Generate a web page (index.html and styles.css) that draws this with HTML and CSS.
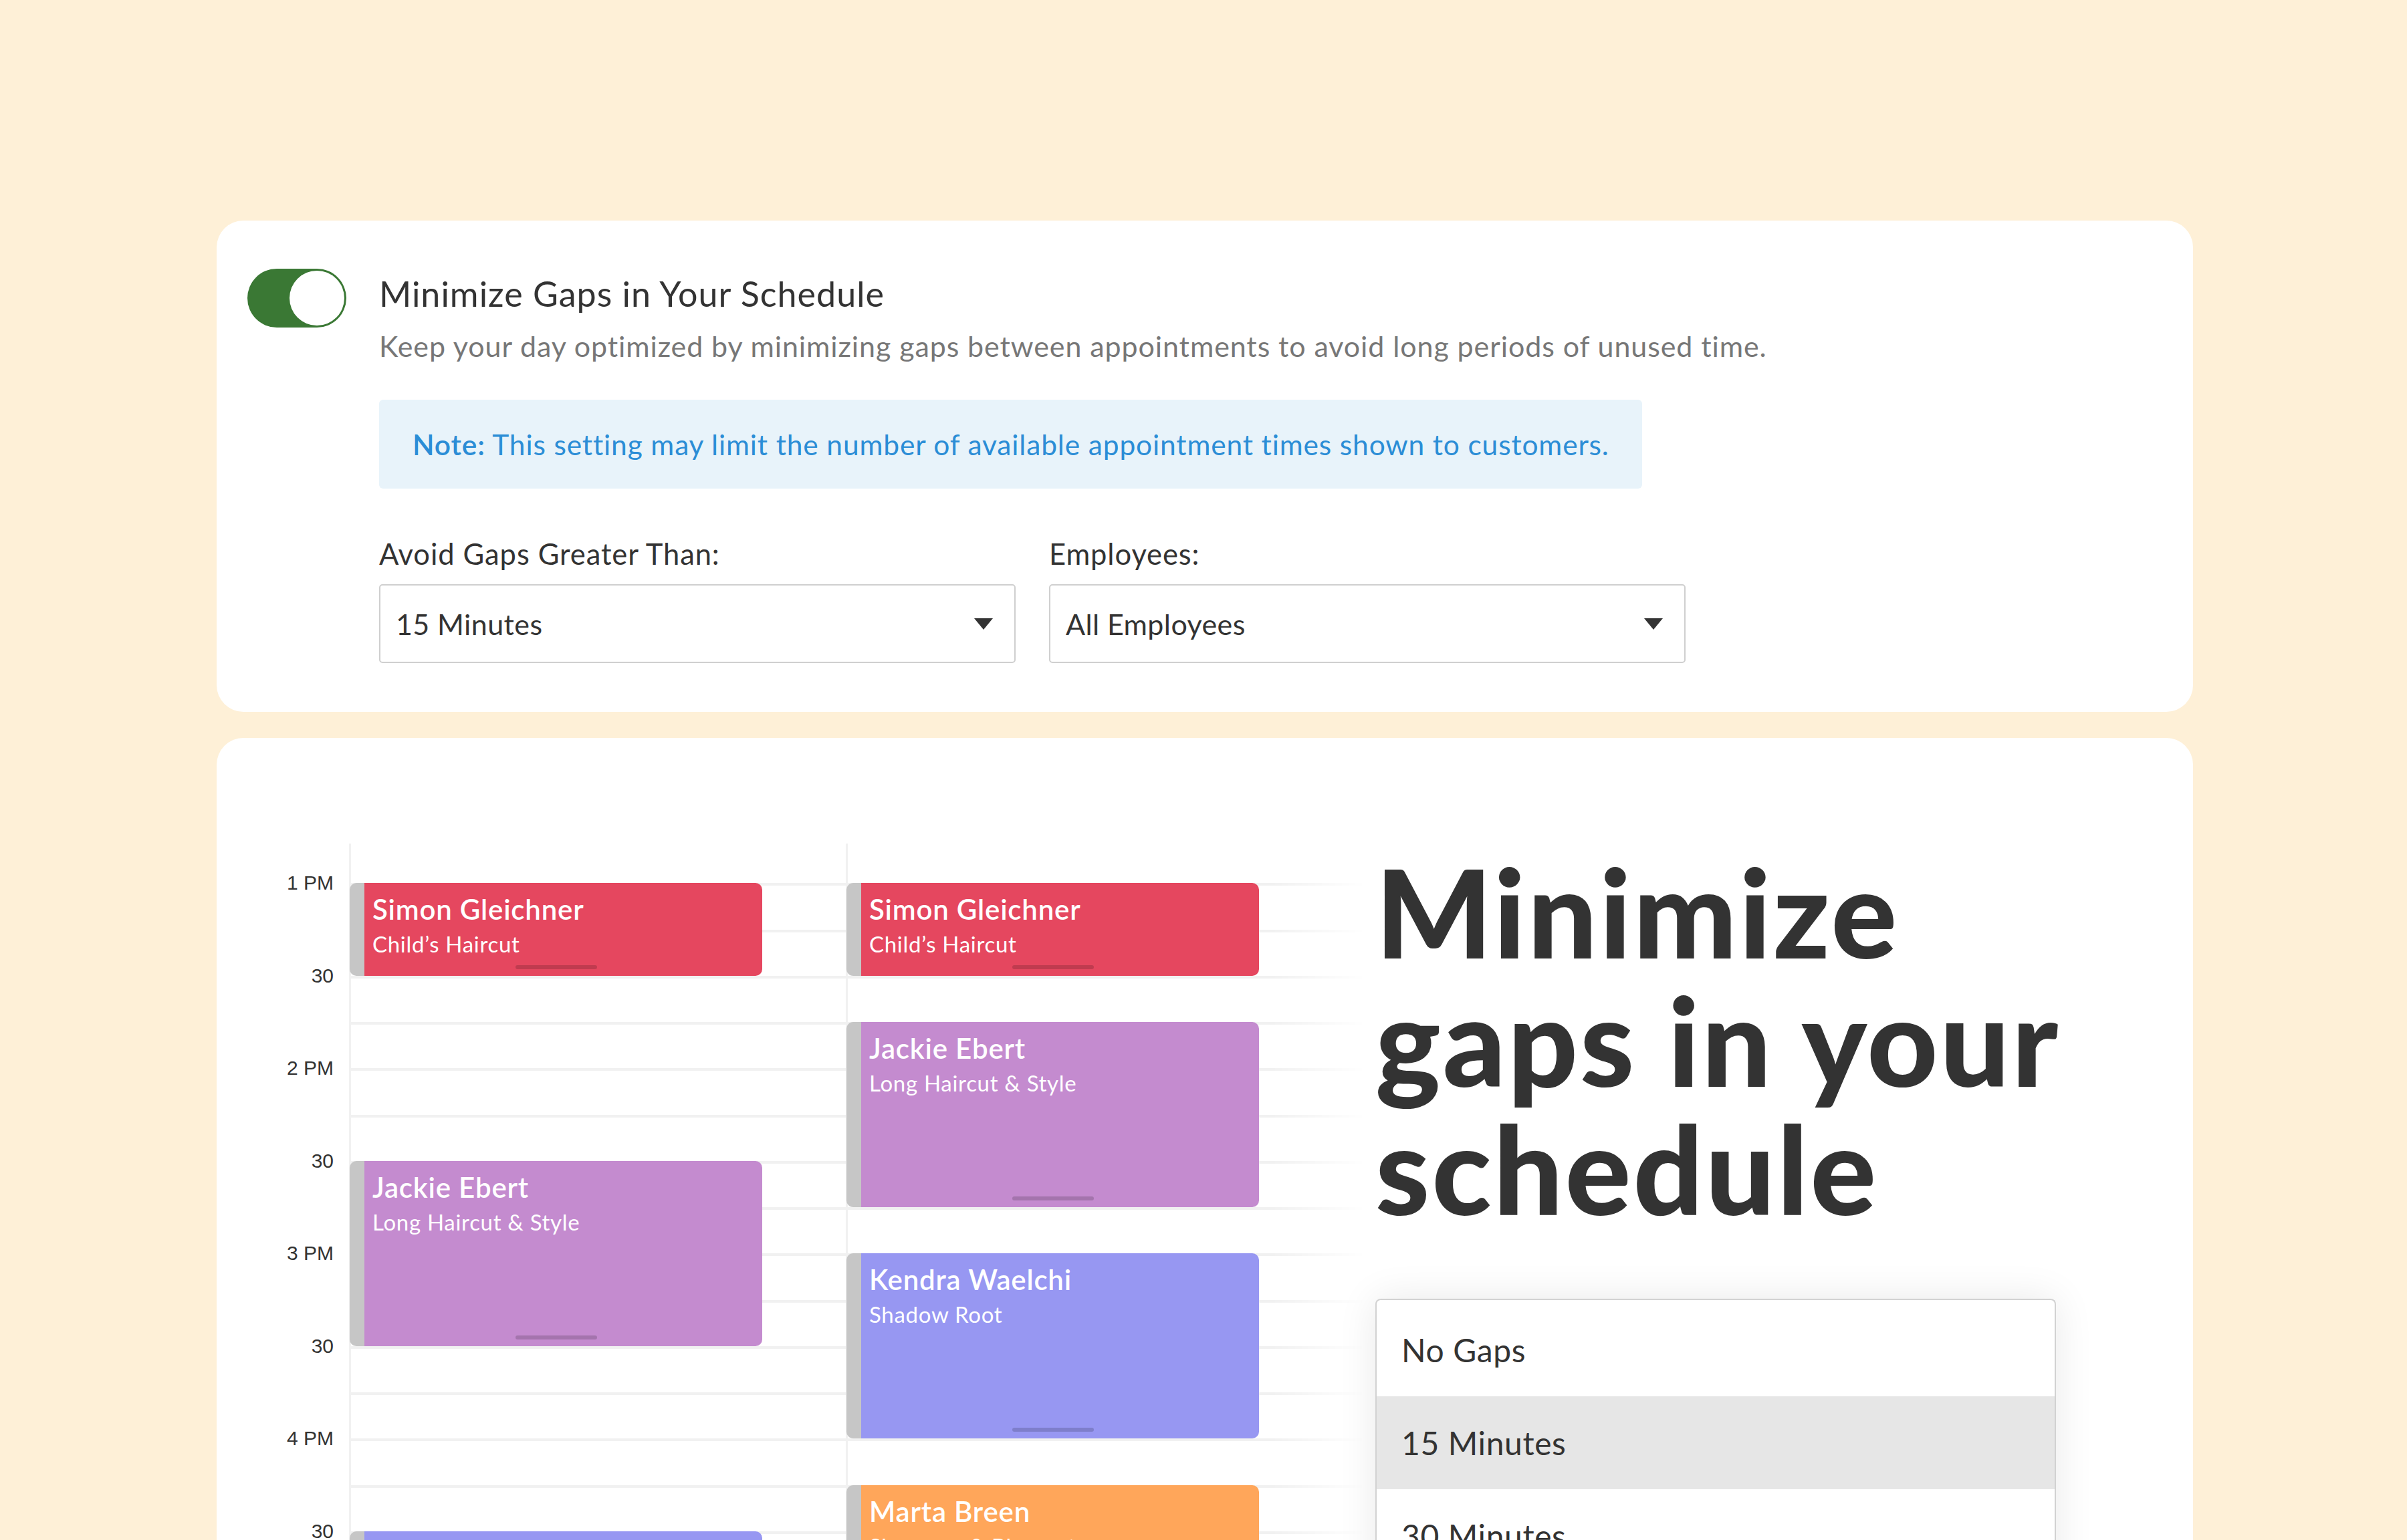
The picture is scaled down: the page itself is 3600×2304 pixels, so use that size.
FILE: index.html
```html
<!DOCTYPE html>
<html lang="en">
<head>
<meta charset="utf-8">
<title>Minimize Gaps</title>
<link rel="stylesheet" href="styles.css">
</head>
<body>
<main class="page">
  <section class="card settings">
    <div class="toggle" role="switch" aria-checked="true"><span class="knob"></span></div>
    <div class="settings-body">
      <h2 class="title">Minimize Gaps in Your Schedule</h2>
      <p class="desc">Keep your day optimized by minimizing gaps between appointments to avoid long periods of unused time.</p>
      <div class="note"><strong>Note:</strong> This setting may limit the number of available appointment times shown to customers.</div>
      <div class="fields">
        <div class="field">
          <label class="label">Avoid Gaps Greater Than:</label>
          <div class="select"><span>15 Minutes</span><span class="caret"></span></div>
        </div>
        <div class="field">
          <label class="label">Employees:</label>
          <div class="select"><span>All Employees</span><span class="caret"></span></div>
        </div>
      </div>
    </div>
  </section>

  <section class="card showcase">
    <div class="calendar">
      <div class="times">
        <div class="time">1 PM</div>
        <div class="time">30</div>
        <div class="time">2 PM</div>
        <div class="time">30</div>
        <div class="time">3 PM</div>
        <div class="time">30</div>
        <div class="time">4 PM</div>
        <div class="time">30</div>
      </div>
      <div class="grid">
        <div class="slots">
          <div class="slot"></div><div class="slot"></div><div class="slot"></div><div class="slot"></div>
          <div class="slot"></div><div class="slot"></div><div class="slot"></div><div class="slot"></div>
          <div class="slot"></div><div class="slot"></div><div class="slot"></div><div class="slot"></div>
          <div class="slot"></div><div class="slot"></div><div class="slot"></div><div class="slot"></div>
        </div>
        <div class="columns">
          <div class="col">
            <div class="event red" style="top:69.25px;height:138.5px"><div class="name">Simon Gleichner</div><div class="service">Child’s Haircut</div><span class="handle"></span></div>
            <div class="event purple" style="top:485px;height:277px"><div class="name">Jackie Ebert</div><div class="service">Long Haircut &amp; Style</div><span class="handle"></span></div>
            <div class="event blue" style="top:1038.75px;height:277px"><div class="name">Kendra Waelchi</div><div class="service">Shadow Root</div><span class="handle"></span></div>
          </div>
          <div class="col">
            <div class="event red" style="top:69.25px;height:138.5px"><div class="name">Simon Gleichner</div><div class="service">Child’s Haircut</div><span class="handle"></span></div>
            <div class="event purple" style="top:277px;height:277px"><div class="name">Jackie Ebert</div><div class="service">Long Haircut &amp; Style</div><span class="handle"></span></div>
            <div class="event blue" style="top:623.25px;height:277px"><div class="name">Kendra Waelchi</div><div class="service">Shadow Root</div><span class="handle"></span></div>
            <div class="event orange" style="top:969.5px;height:207.75px"><div class="name">Marta Breen</div><div class="service">Shampoo &amp; Blowout</div><span class="handle"></span></div>
          </div>
        </div>
      </div>
    </div>
    <div class="promo">
      <h1 class="headline"><span class="line">Minimize</span><span class="line">gaps in your</span><span class="line">schedule</span></h1>
      <ul class="menu">
        <li>No Gaps</li>
        <li class="active">15 Minutes</li>
        <li>30 Minutes</li>
        <li>45 Minutes</li>
      </ul>
    </div>
  </section>
</main>
</body>
</html>
```

FILE: styles.css
```css
html, body {
  margin: 0;
  padding: 0;
  overflow: hidden;
}
body {
  background: #fef0d7;
  font-family: "Lato", "Open Sans", sans-serif;
  color: #333;
}
.page {
  padding: 330px 0 0 324px;
  width: 2956px;
  display: flex;
  flex-direction: column;
  gap: 39px;
}
.card {
  background: #fff;
  border-radius: 40px;
}

/* settings card */
.settings {
  display: flex;
  gap: 49px;
  padding: 72px 46px 73px;
}
.toggle {
  flex: none;
  width: 148px;
  height: 88px;
  border-radius: 44px;
  background: #3a7834;
  display: flex;
  justify-content: flex-end;
}
.knob {
  width: 82px;
  height: 82px;
  margin: 3px;
  border-radius: 50%;
  background: #fff;
}
.settings-body {
  display: flex;
  flex-direction: column;
  align-items: flex-start;
}
.title {
  margin: 7px 0 0;
  font-size: 52px;
  line-height: 60px;
  letter-spacing: 1px;
  font-weight: 400;
  color: #333;
}
.desc {
  margin: 25px 0 0;
  font-size: 43px;
  line-height: 48px;
  letter-spacing: 0.9px;
  color: #777;
}
.note {
  margin-top: 56px;
  padding: 0 49px 0 50px;
  height: 133px;
  display: flex;
  align-items: center;
  background: #e8f3fa;
  border-radius: 6px;
  font-size: 42.5px;
  letter-spacing: 0.85px;
  color: #2b8dd6;
  white-space: pre;
}
.note strong {
  font-weight: 600;
}
.fields {
  margin-top: 74px;
  display: flex;
  gap: 50px;
}
.field {
  display: flex;
  flex-direction: column;
  gap: 23px;
}
.label {
  font-size: 43.5px;
  line-height: 46px;
  letter-spacing: 0.9px;
  color: #333;
}
.select {
  box-sizing: border-box;
  width: 952px;
  height: 118px;
  border: 2px solid #cfcfcf;
  border-radius: 5px;
  padding: 0 32px 0 23px;
  display: flex;
  align-items: center;
  justify-content: space-between;
  font-size: 43px;
  letter-spacing: 0.4px;
  color: #333;
}
.caret {
  width: 0;
  height: 0;
  border-left: 14px solid transparent;
  border-right: 14px solid transparent;
  border-top: 17px solid #333;
}

/* showcase card */
.showcase {
  height: 1400px;
  display: flex;
  overflow: hidden;
}
.calendar {
  flex: none;
  width: 1733px;
  display: flex;
  padding-top: 148px;
}
.times {
  flex: none;
  width: 198px;
  box-sizing: border-box;
  padding-right: 23px;
}
.time {
  height: 138.5px;
  display: flex;
  align-items: center;
  justify-content: flex-end;
  font-family: "Liberation Sans", Arial, sans-serif;
  font-size: 30px;
  color: #333;
}
.grid {
  position: relative;
  flex: 1;
}
.slots {
  -webkit-mask-image: linear-gradient(to right, #000 1380px, transparent 1520px);
  mask-image: linear-gradient(to right, #000 1380px, transparent 1520px);
}
.slot {
  box-sizing: border-box;
  height: 69.25px;
}
.slot + .slot {
  border-top: 4px solid #f1f1f1;
}
.columns {
  position: absolute;
  inset: 0;
  display: flex;
}
.col {
  position: relative;
  width: 743px;
}
.col::before {
  content: "";
  position: absolute;
  left: 0;
  top: 10px;
  bottom: 0;
  width: 3px;
  background: #f1f1f1;
}
.event {
  position: absolute;
  left: 1px;
  width: 617px;
  box-sizing: border-box;
  border-left: 22px solid #c6c6c6;
  border-radius: 10px;
  padding: 16px 12px 0;
  color: #fff;
}
.event.red { background: #e5475f; }
.event.purple { background: #c48bcf; }
.event.blue { background: #9797f2; }
.event.orange { background: #ffa65a; }
.name {
  font-size: 42px;
  line-height: 46px;
  letter-spacing: 0.8px;
  font-weight: 600;
}
.service {
  margin-top: 11px;
  font-size: 33px;
  line-height: 36px;
  letter-spacing: 0.7px;
}
.handle {
  position: absolute;
  bottom: 10px;
  left: calc(50% - 72px);
  width: 122px;
  height: 6px;
  border-radius: 3px;
  background: rgba(0, 0, 0, 0.16);
}

.promo {
  display: flex;
  flex-direction: column;
  padding-top: 163px;
}
.headline {
  margin: 0;
  font-size: 184px;
  font-weight: 900;
  color: #333;
  letter-spacing: 3px;
}
.headline .line {
  display: block;
  height: 192px;
  line-height: 192px;
}
.menu {
  list-style: none;
  margin: 100px 0 0;
  padding: 5px 0 0;
  width: 1018px;
  box-sizing: border-box;
  border: 2px solid #d2d2d2;
  border-bottom: none;
  border-radius: 8px 8px 0 0;
  background: #fff;
  box-shadow: 0 0 60px rgba(0, 0, 0, 0.09);
}
.menu li {
  height: 139px;
  line-height: 139px;
  padding-left: 37px;
  font-size: 48px;
  letter-spacing: 0.6px;
  color: #333;
}
.menu li.active {
  background: #e6e6e6;
}
```
